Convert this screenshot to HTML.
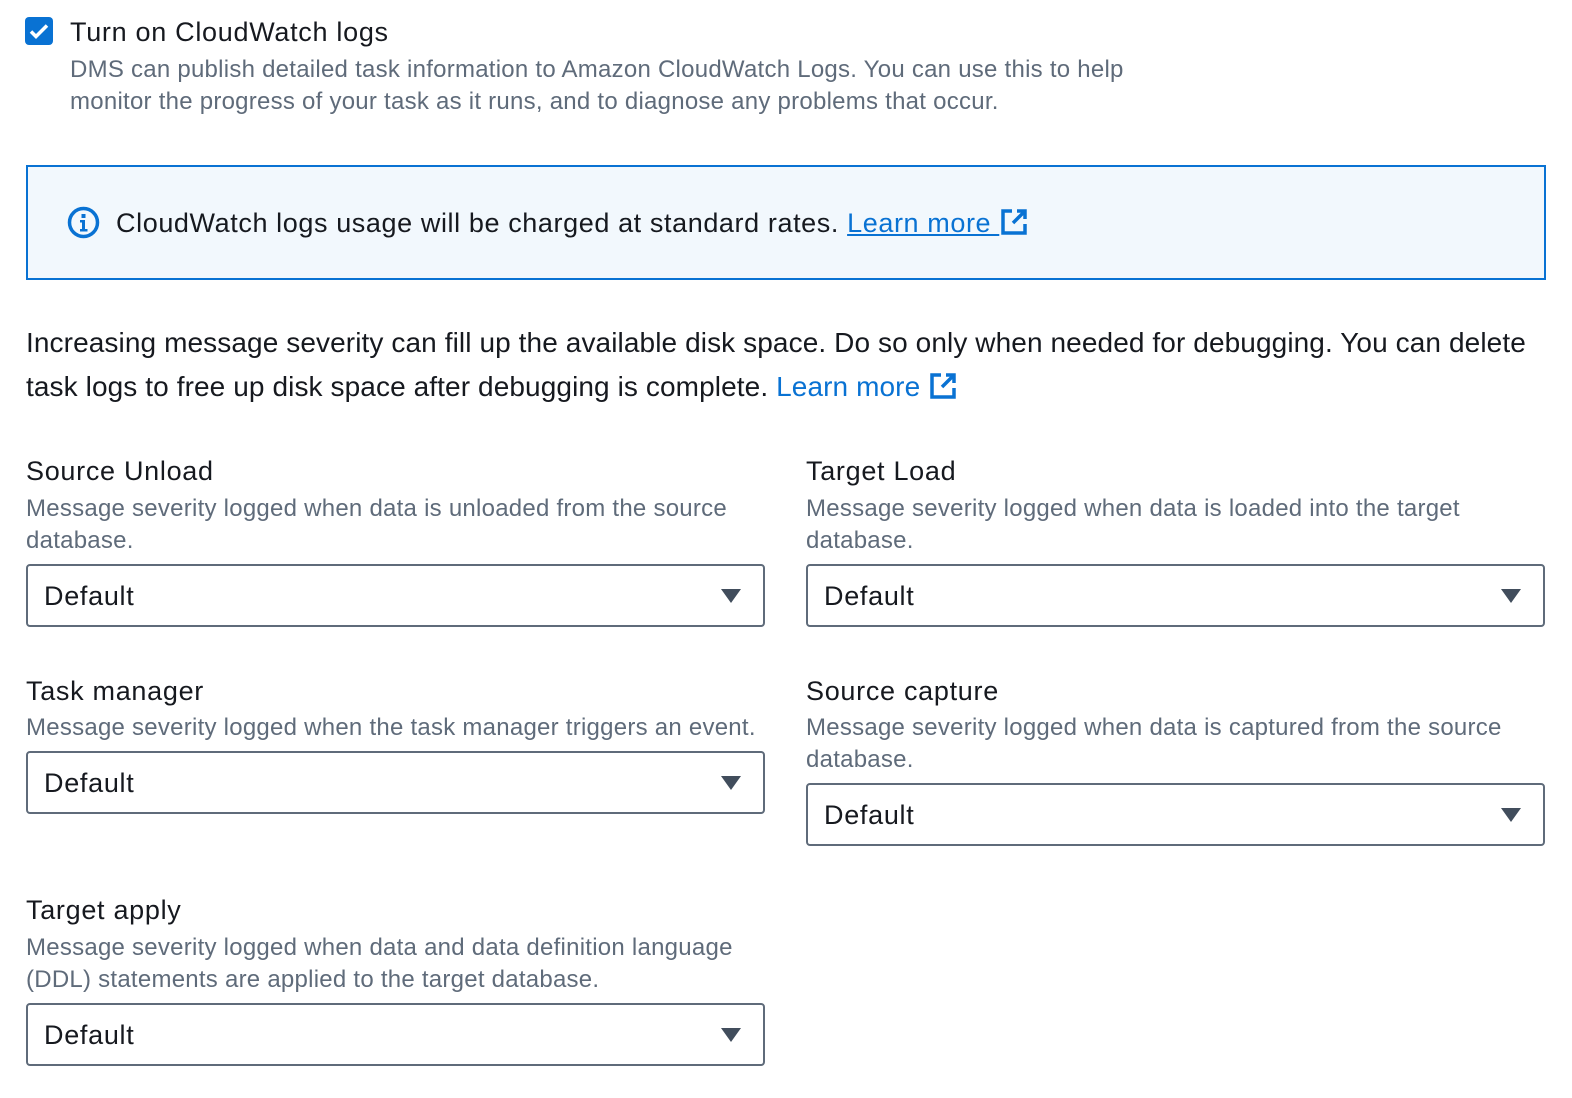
<!DOCTYPE html>
<html><head><meta charset="utf-8"><style>
body{margin:0;width:1572px;height:1098px;background:#fff;font-family:"Liberation Sans",sans-serif;color:#16191f;position:relative;overflow:hidden}
.a{position:absolute;white-space:nowrap}
.t{font-size:27px;line-height:32px;letter-spacing:0.7px}
.d{font-size:24px;line-height:32px;color:#5f6b7a;letter-spacing:0.25px}
.sel{position:absolute;border:2px solid #5f6b7a;border-radius:4px;box-sizing:border-box;width:739px;height:63px}
.sel span{position:absolute;left:16px;top:14px;font-size:27px;line-height:32px;letter-spacing:0.7px}
.sel i{position:absolute;right:22px;top:23px;width:0;height:0;border-left:10px solid transparent;border-right:10px solid transparent;border-top:14px solid #414d5c}
a{color:#0972d3}
</style></head><body>
<div class="a" style="left:25px;top:17px;width:28px;height:28px;background:#0972d3;border-radius:4px">
<svg width="28" height="28" viewBox="0 0 28 28"><path d="M6 14.5l5 5 11-11" stroke="#fff" stroke-width="3.5" fill="none"/></svg></div>
<div class="a t" style="left:70px;top:16px">Turn on CloudWatch logs</div>
<div class="a d" style="left:70px;top:54px">DMS can publish detailed task information to Amazon CloudWatch Logs. You can use this to help</div>
<div class="a d" style="left:70px;top:86px">monitor the progress of your task as it runs, and to diagnose any problems that occur.</div>

<div class="a" style="left:26px;top:165px;width:1520px;height:115px;box-sizing:border-box;border:2px solid #0972d3;background:#f2f8fd"></div>
<svg class="a" style="left:67px;top:206px" width="33" height="33" viewBox="0 0 33 33"><circle cx="16.5" cy="16.5" r="14" stroke="#0972d3" stroke-width="3.5" fill="none"/><rect x="14.5" y="8" width="4" height="4" fill="#0972d3"/><path d="M13 14h5v9h2.5v2.5h-7.5v-2.5h2v-6.5h-2z" fill="#0972d3"/></svg>
<div class="a t" style="left:116px;top:207px;letter-spacing:0.6px">CloudWatch logs usage will be charged at standard rates. <a style="text-decoration:underline">Learn more <svg width="30" height="30" viewBox="0 0 30 30" style="vertical-align:-5px"><path d="M13 4H4v22h22v-9" stroke="#0972d3" stroke-width="3.5" fill="none"/><path d="M18 4h8v8M26 4L14 16" stroke="#0972d3" stroke-width="3.5" fill="none"/></svg></a></div>

<div class="a t" style="left:26px;top:327px;font-size:28px;letter-spacing:0.1px">Increasing message severity can fill up the available disk space. Do so only when needed for debugging. You can delete</div>
<div class="a t" style="left:26px;top:371px;font-size:28px;letter-spacing:0.1px">task logs to free up disk space after debugging is complete. <a style="text-decoration:none">Learn more <svg width="30" height="30" viewBox="0 0 30 30" style="vertical-align:-5px"><path d="M13 4H4v22h22v-9" stroke="#0972d3" stroke-width="3.5" fill="none"/><path d="M18 4h8v8M26 4L14 16" stroke="#0972d3" stroke-width="3.5" fill="none"/></svg></a></div>

<div class="a t" style="left:26px;top:455px">Source Unload</div>
<div class="a d" style="left:26px;top:493px">Message severity logged when data is unloaded from the source</div>
<div class="a d" style="left:26px;top:525px">database.</div>
<div class="sel" style="left:26px;top:564px"><span>Default</span><i></i></div>

<div class="a t" style="left:806px;top:455px">Target Load</div>
<div class="a d" style="left:806px;top:493px">Message severity logged when data is loaded into the target</div>
<div class="a d" style="left:806px;top:525px">database.</div>
<div class="sel" style="left:806px;top:564px"><span>Default</span><i></i></div>

<div class="a t" style="left:26px;top:675px">Task manager</div>
<div class="a d" style="left:26px;top:712px">Message severity logged when the task manager triggers an event.</div>
<div class="sel" style="left:26px;top:751px"><span>Default</span><i></i></div>

<div class="a t" style="left:806px;top:675px">Source capture</div>
<div class="a d" style="left:806px;top:712px">Message severity logged when data is captured from the source</div>
<div class="a d" style="left:806px;top:744px">database.</div>
<div class="sel" style="left:806px;top:783px"><span>Default</span><i></i></div>

<div class="a t" style="left:26px;top:894px">Target apply</div>
<div class="a d" style="left:26px;top:932px">Message severity logged when data and data definition language</div>
<div class="a d" style="left:26px;top:964px">(DDL) statements are applied to the target database.</div>
<div class="sel" style="left:26px;top:1003px"><span>Default</span><i></i></div>
</body></html>
